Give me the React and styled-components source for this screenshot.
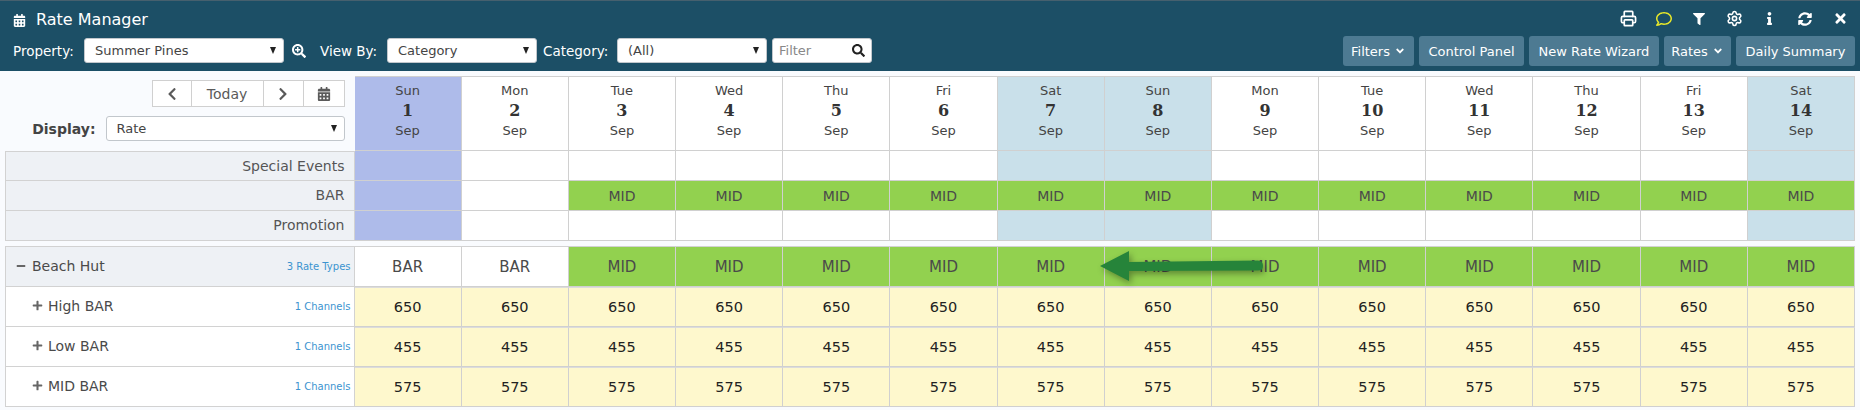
import React from "react";
import styled, { createGlobalStyle } from "styled-components";
import { FaCalendarAlt, FaChevronLeft, FaChevronRight, FaSearchPlus, FaSearch, FaRegComment, FaFilter, FaInfo, FaSyncAlt, FaTimes, FaPlus, FaMinus, FaAngleDown } from "react-icons/fa";
import { Printer, Settings } from "lucide-react";

const Global = createGlobalStyle`
  html, body { margin: 0; padding: 0; background: #f9fbfe; overflow: hidden; }
  body { font-family: "DejaVu Sans", Verdana, sans-serif; font-size: 13px; color: #444; }
  * { box-sizing: border-box; }
`;

const Page = styled.div`width: 1860px; height: 410px; display: flex; flex-direction: column;`;

const Header = styled.header`
  height: 71px; background: #1c4f66; border-top: 1px solid #46606e;
  display: flex; justify-content: space-between; color: #fff; flex: none;
`;
const HeaderLeft = styled.div`display: flex; flex-direction: column; padding-left: 13px;`;
const Title = styled.div`
  height: 37px; padding-top: 1px; display: flex; align-items: center; gap: 10px; font-size: 16px; line-height: 22px;
`;
const Toolbar = styled.div`display: flex; align-items: center; height: 25px;`;
const Label = styled.span`font-size: 13.5px; color: #fff; width: ${p => p.$w}px; margin-left: ${p => p.$ml || 0}px; flex: none;`;
const Select = styled.div`
  width: ${p => p.$w}px; height: 25px; background: #fff; border: 1px solid #c2c7cc; border-radius: 3px;
  color: #444; font-size: 13px; display: flex; align-items: center; justify-content: space-between;
  padding: 0 7px 0 10px; flex: none;
`;
const Caret = styled.i`width: 0; height: 0; border-left: 3.5px solid transparent; border-right: 3.5px solid transparent; border-top: 7px solid #222;`;
const Zoom = styled.span`display: inline-flex; margin: 0 14px 0 8px; font-size: 14px; color: #fff;`;
const FilterBox = styled(Select)`margin-left: 5px; color: #888; padding: 0 6px; svg { color: #222; }`;

const HeaderRight = styled.div`display: flex; flex-direction: column; align-items: flex-end;`;
const IconBar = styled.div`height: 35px; display: flex; align-items: center; padding-right: 2px;`;
const IconSlot = styled.span`width: 35.3px; display: flex; justify-content: center; color: ${p => p.$c || "#fff"};`;
const Buttons = styled.div`display: flex; gap: 5px; margin-right: 5px;`;
const Btn = styled.button`
  height: 30px; width: ${p => p.$w}px; background: #4d7a92; color: #fff; border: 0; border-radius: 3px; font: 13px "DejaVu Sans", sans-serif;
  display: flex; align-items: center; justify-content: center; gap: 4px; padding: 0; white-space: nowrap;
`;

const Main = styled.main`padding: 5px 5px 0; position: relative;`;
const TopGrid = styled.div`display: grid; grid-template-columns: 349.5px repeat(14, 1fr);`;
const RateGrid = styled(TopGrid)`margin-top: 5px; border-top: 1px solid #d2d2d2;`;

const Controls = styled.div`
  height: 75px; display: flex; flex-direction: column; align-items: flex-end; padding: 4px 10px 0 0;
`;
const Pager = styled.div`display: flex; height: 27px; background: #fff; border: 1px solid #d0d0d0;`;
const PagerItem = styled.span`
  width: ${p => p.$w}px; display: flex; align-items: center; justify-content: center; color: #5a5a5a; font-size: 14px;
  border-right: ${p => p.$last ? "0" : "1px solid #d0d0d0"};
`;
const DisplayRow = styled.div`display: flex; align-items: center; gap: 10px; margin-top: 9px;`;
const DisplayLabel = styled.b`font-size: 14px; color: #444;`;

const Day = styled.div`
  height: 75px; padding-top: 4px; background: ${p => p.$bg || "#fff"}; text-align: center; line-height: 20px;
  border-top: 1px solid #d0d0d0; border-right: 1px solid #d0d0d0; border-bottom: 1px solid #d0d0d0; font-size: 13px; color: #444;
`;
const DayNum = styled.div`font: bold 16px/20px "DejaVu Serif", serif; color: #333;`;

const SideLabel = styled.div`
  height: 30px; background: #eef1f5; border: 1px solid #d2d2d2; border-top: ${p => p.$first ? "1px solid #d2d2d2" : "0"};
  text-align: right; padding-right: 9px; line-height: 29px; font-size: 14px; color: #555;
`;
const Cell = styled.div`
  height: ${p => p.$h || 30}px; background: ${p => p.$bg || "#fff"}; border-right: 1px solid #d0d0d0; border-bottom: 1px solid #d0d0d0;
  border-top: ${p => p.$rule ? "1px solid #dcdcdc" : "0"};
  display: flex; align-items: center; justify-content: center; font-size: ${p => p.$fs || 14}px; color: ${p => p.$color || "#4a4a4a"};
`;
const RowHead = styled.div`
  height: 40px; background: ${p => p.$bg || "#fff"}; border-left: 1px solid #d2d2d2; border-bottom: 1px solid #d2d2d2; border-right: 1px solid #d2d2d2;
  display: flex; align-items: center; justify-content: space-between; padding: 0 3px 2px ${p => p.$pl}px;
`;
const RowName = styled.span`display: flex; align-items: center; gap: ${p => p.$gap}px; font-size: 14px; color: #4a4a4a; svg { color: #666; }`;
const Small = styled.span`font-size: 10px; color: #3b94d0; padding-top: 2px;`;
const ArrowOverlay = styled.svg`position: absolute; left: 1090px; top: 177px; width: 185px; height: 50px; overflow: visible; filter: drop-shadow(2px 3px 3px rgba(0,0,0,.35));`;

const days = ["Sun", "Mon", "Tue", "Wed", "Thu", "Fri", "Sat", "Sun", "Mon", "Tue", "Wed", "Thu", "Fri", "Sat"];
const shade = i => (i === 0 ? "#aebbea" : i === 6 || i === 7 || i === 13 ? "#c9e0ea" : undefined);
const GREEN = "#92d14f";
const YELLOW = "#fef8cd";
const idx = days.map((_, i) => i);

const rates = [["High BAR", 650], ["Low BAR", 455], ["MID BAR", 575]];

export default function App() {
  return (
    <Page>
      <Global />
      <Header>
        <HeaderLeft>
          <Title><FaCalendarAlt size={13} />Rate Manager</Title>
          <Toolbar>
            <Label $w={71}>Property:</Label>
            <Select $w={200}>Summer Pines<Caret /></Select>
            <Zoom><FaSearchPlus /></Zoom>
            <Label $w={67}>View By:</Label>
            <Select $w={150}>Category<Caret /></Select>
            <Label $w={74} $ml={6}>Category:</Label>
            <Select $w={150}>(All)<Caret /></Select>
            <FilterBox $w={100}>Filter<FaSearch size={13} /></FilterBox>
          </Toolbar>
        </HeaderLeft>
        <HeaderRight>
          <IconBar>
            <IconSlot><Printer size={17} strokeWidth={2.4} /></IconSlot>
            <IconSlot $c="#e8e82a"><FaRegComment size={16} /></IconSlot>
            <IconSlot><FaFilter size={12} /></IconSlot>
            <IconSlot><Settings size={17} strokeWidth={2.2} /></IconSlot>
            <IconSlot><FaInfo size={13} /></IconSlot>
            <IconSlot><FaSyncAlt size={14} /></IconSlot>
            <IconSlot><FaTimes size={15} /></IconSlot>
          </IconBar>
          <Buttons>
            <Btn $w={71}>Filters<FaAngleDown size={12} /></Btn>
            <Btn $w={105}>Control Panel</Btn>
            <Btn $w={130}>New Rate Wizard</Btn>
            <Btn $w={67}>Rates<FaAngleDown size={12} /></Btn>
            <Btn $w={119}>Daily Summary</Btn>
          </Buttons>
        </HeaderRight>
      </Header>
      <Main>
        <TopGrid>
          <Controls>
            <Pager>
              <PagerItem $w={39}><FaChevronLeft size={14} /></PagerItem>
              <PagerItem $w={72}>Today</PagerItem>
              <PagerItem $w={40}><FaChevronRight size={14} /></PagerItem>
              <PagerItem $w={40} $last><FaCalendarAlt size={14} /></PagerItem>
            </Pager>
            <DisplayRow>
              <DisplayLabel>Display:</DisplayLabel>
              <Select $w={239}>Rate<Caret /></Select>
            </DisplayRow>
          </Controls>
          {days.map((d, i) => (
            <Day key={i} $bg={shade(i)}>{d}<DayNum>{i + 1}</DayNum>Sep</Day>
          ))}
          <SideLabel $first>Special Events</SideLabel>
          {idx.map(i => <Cell key={i} $bg={shade(i)} />)}
          <SideLabel>BAR</SideLabel>
          {idx.map(i => <Cell key={i} $bg={i < 2 ? shade(i) : GREEN}>{i < 2 ? "" : "MID"}</Cell>)}
          <SideLabel>Promotion</SideLabel>
          {idx.map(i => <Cell key={i} $bg={shade(i)} />)}
        </TopGrid>
        <RateGrid>
          <RowHead $bg="#eef1f5" $pl={10}>
            <RowName $gap={6}><FaMinus size={10} />Beach Hut</RowName>
            <Small>3 Rate Types</Small>
          </RowHead>
          {idx.map(i => <Cell key={i} $h={40} $fs={15} $bg={i < 2 ? "#fff" : GREEN}>{i < 2 ? "BAR" : "MID"}</Cell>)}
          {rates.map(([name, v]) => (
            <React.Fragment key={name}>
              <RowHead $pl={26}>
                <RowName $gap={5}><FaPlus size={11} />{name}</RowName>
                <Small>1 Channels</Small>
              </RowHead>
              {idx.map(i => <Cell key={i} $h={40} $fs={14.5} $bg={YELLOW} $color="#222" $rule>{v}</Cell>)}
            </React.Fragment>
          ))}
        </RateGrid>
        <ArrowOverlay viewBox="0 0 185 50">
          <path d="M10 18 L39 3 L39 14 L168 12.5 Q173 13 173 18 Q173 22.5 168 22.5 L39 23 L39 33 Z" fill="#26843a" />
        </ArrowOverlay>
      </Main>
    </Page>
  );
}
